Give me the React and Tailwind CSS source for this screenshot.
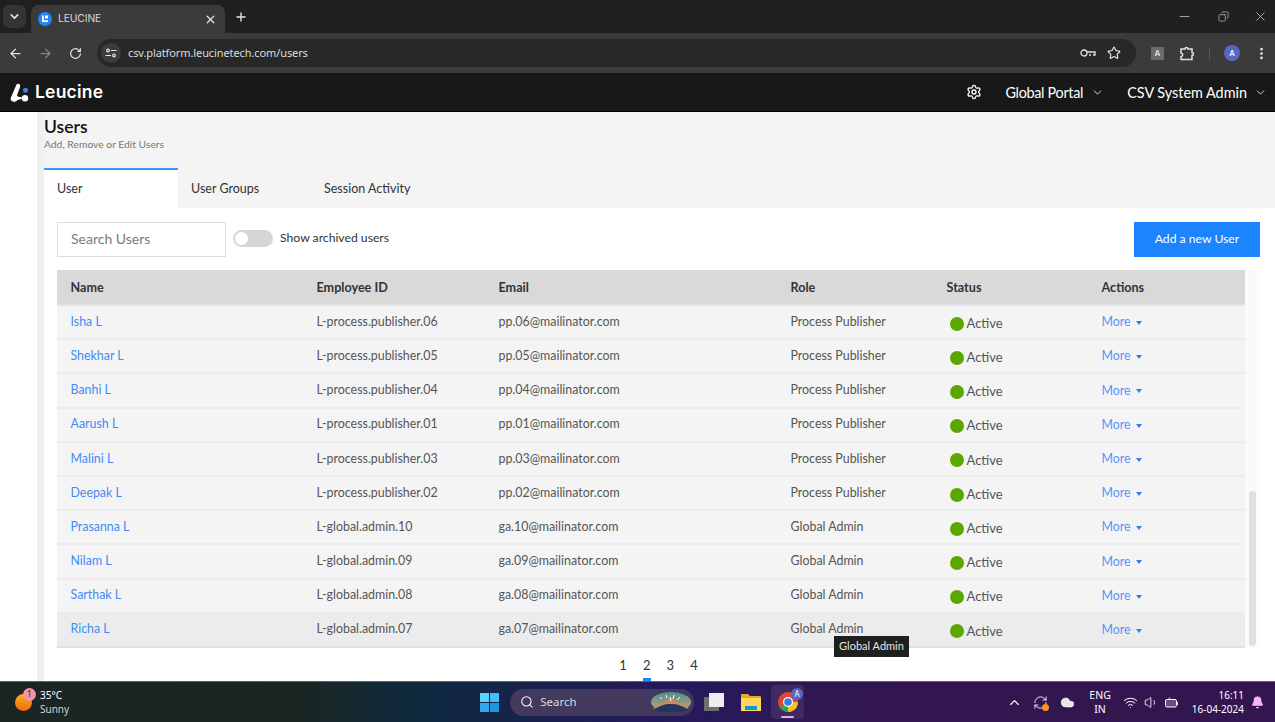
import {
  ArrowLeft,
  ArrowRight,
  Bell,
  ChevronDown,
  ChevronUp,
  Cloud,
  Copy,
  EllipsisVertical,
  Minus,
  Plus,
  RefreshCw,
  RotateCw,
  Search,
  Settings,
  Star,
  Volume1,
  Wifi,
  X,
} from "lucide-react";

const users = [
  ["Isha L", "L-process.publisher.06", "pp.06@mailinator.com", "Process Publisher"],
  ["Shekhar L", "L-process.publisher.05", "pp.05@mailinator.com", "Process Publisher"],
  ["Banhi L", "L-process.publisher.04", "pp.04@mailinator.com", "Process Publisher"],
  ["Aarush L", "L-process.publisher.01", "pp.01@mailinator.com", "Process Publisher"],
  ["Malini L", "L-process.publisher.03", "pp.03@mailinator.com", "Process Publisher"],
  ["Deepak L", "L-process.publisher.02", "pp.02@mailinator.com", "Process Publisher"],
  ["Prasanna L", "L-global.admin.10", "ga.10@mailinator.com", "Global Admin"],
  ["Nilam L", "L-global.admin.09", "ga.09@mailinator.com", "Global Admin"],
  ["Sarthak L", "L-global.admin.08", "ga.08@mailinator.com", "Global Admin"],
  ["Richa L", "L-global.admin.07", "ga.07@mailinator.com", "Global Admin"],
];

const cols = "grid grid-cols-[246px_182px_292px_156px_155px_1fr] pl-[13.500px] pr-[13px]";

function ChromeBar() {
  return (
    <div className="font-['Inter',sans-serif] text-[#e3e3e3]">
      <div className="flex h-[33px] items-end bg-[#1f2020] pl-[3px]">
        <div className="mb-[1px] flex h-[23px] w-[23px] items-center justify-center self-center rounded-md bg-[#333434]">
          <ChevronDown size={13} strokeWidth={3} />
        </div>
        <div className="ml-[5px] flex h-[28px] w-[194px] items-center rounded-t-lg bg-[#3b3b3b] pl-[7px] pr-[8px]">
          <svg width="14" height="14" viewBox="0 0 14 14" className="shrink-0">
            <circle cx="7" cy="7" r="7" fill="#2186f6" />
            <path d="M4 3.500h1.800v4.700h4.200V10H4z" fill="#fff" />
            <rect x="7" y="3.500" width="3" height="3" fill="#fff" />
          </svg>
          <span className="ml-[6px] flex-1 text-[10.300px] tracking-[-0.1px] text-[#d8d8d8]">LEUCINE</span>
          <X size={13} strokeWidth={2.4} />
        </div>
        <Plus size={14} strokeWidth={2.4} className="mb-[9px] ml-[9px]" />
        <div className="mb-[9px] ml-auto flex items-center pr-[7px] text-[#cfcfcf]">
          <Minus size={15} strokeWidth={1.2} />
          <Copy size={11} strokeWidth={1.4} className="ml-[26px] -scale-x-100" />
          <X size={15} strokeWidth={1.2} className="ml-[24px]" />
        </div>
      </div>
      <div className="flex h-[40px] items-center bg-[#3b3b3b] pl-[8px] pr-[6px]">
        <ArrowLeft size={15} strokeWidth={2} />
        <ArrowRight size={15} strokeWidth={2} className="ml-[15px] text-[#858585]" />
        <RotateCw size={13} strokeWidth={2.2} className="ml-[16px]" />
        <div className="ml-[15px] flex h-[28px] flex-1 items-center rounded-full bg-[#282828] pl-[4px] pr-[15px]">
          <div className="flex h-[20px] w-[20px] items-center justify-center rounded-full bg-[#3d3d3d]">
            <svg width="12" height="10" viewBox="0 0 12 10" fill="none" stroke="#e3e3e3" strokeWidth="1.2">
              <circle cx="3" cy="2.500" r="1.300" />
              <path d="M6 2.500h5.500M.5 7.500H6" />
              <circle cx="9" cy="7.500" r="1.300" />
            </svg>
          </div>
          <span className="ml-[7px] flex-1 font-['Noto_Sans',sans-serif] text-[11px] tracking-[-0.1px] text-[#dcdcdc]">
            csv.platform.leucinetech.com/users
          </span>
          <svg width="16" height="10" viewBox="0 0 16 10" fill="none" stroke="#e3e3e3" strokeWidth="1.3">
            <circle cx="4" cy="5" r="3" />
            <path d="M7 4h8v3h-2M11 7H9" />
          </svg>
          <Star size={14} strokeWidth={2} className="ml-[11px]" />
        </div>
        <div className="ml-[15px] flex h-[13px] w-[13px] items-center justify-center bg-[#6b6b6b] text-[8px] font-semibold">A</div>
        <svg width="16" height="15" viewBox="0 0 16 15" fill="none" stroke="#e3e3e3" strokeWidth="1.5" className="ml-[16px]">
          <path d="M1 3h4a1.500 1.500 0 0 1 3 0h4v3.500a1.500 1.500 0 0 1 0 3v4H1v-3a1.700 1.700 0 0 0 0-3.500z" />
        </svg>
        <div className="ml-[13px] h-[13px] w-px bg-[#585858]" />
        <div className="ml-[14px] flex h-[16px] w-[16px] items-center justify-center rounded-full bg-[#5468c4] text-[8px] font-medium text-white">A</div>
        <EllipsisVertical size={15} strokeWidth={2.4} className="ml-[14px]" />
      </div>
    </div>
  );
}

function AppHeader() {
  return (
    <div className="flex h-[39px] items-center border-b border-black bg-[#181818] pl-[10px] pr-[8px] pt-[1px] text-white">
      <svg width="19" height="20" viewBox="0 0 19 20" fill="#fff">
        <path d="M6.500 1.500C7.500.3 9.500.6 10 2.200c.4 1.100 0 2-.4 3L7.300 11.500c-.5 1.400.1 2 1.300 2.300l3.400.6 0 1.300-4.500 1.300c-1 1.300-2.700 2.300-4.800 1.500C.8 17.800.3 16.300.8 14.800z" />
        <circle cx="15" cy="15.300" r="3.200" />
        <circle cx="15.500" cy="7.300" r="2.500" fill="#3f7cf2" />
      </svg>
      <span className="ml-[6px] font-['Inter',sans-serif] text-[17.500px] font-semibold tracking-[0.2px]">Leucine</span>
      <div className="ml-auto flex items-center font-['Lato',sans-serif] text-[14.400px]">
        <Settings size={16} strokeWidth={2} />
        <span className="ml-[23px] tracking-[-0.3px]">Global Portal</span>
        <ChevronDown size={13} strokeWidth={1.5} className="ml-[8px]" />
        <span className="ml-[23px]">CSV System Admin</span>
        <ChevronDown size={13} strokeWidth={1.5} className="ml-[7px]" />
      </div>
    </div>
  );
}

function Toolbar() {
  return (
    <div className="flex items-start pl-[13px] pr-[15px] pt-[14px]">
      <div className="flex h-[35px] w-[169px] items-center border border-[#dcdcdc] pb-[3px] pl-[13px] text-[14px] text-[#7a7a7a]">
        Search Users
      </div>
      <div className="ml-[7px] mt-[8px] flex h-[17px] w-[40px] items-center rounded-full bg-[#d6d6d6] pl-[2px]">
        <div className="h-[13px] w-[13px] rounded-full bg-white" />
      </div>
      <span className="ml-[7px] mt-[7px] text-[12.200px] text-[#333]">Show archived users</span>
      <button className="ml-auto flex h-[35px] w-[126px] items-center justify-center bg-[#1d84ff] text-[12.200px] text-white">
        Add a new User
      </button>
    </div>
  );
}

function UserTable() {
  return (
    <div className="relative mx-[13px] mt-[13px] mr-[15px] flex bg-[#fafafa]">
      <div className="w-[1188px]">
        <div className={`${cols} h-[36px] items-center border-b-2 border-[#e2e2e2] bg-[#d9d9d9] pt-[2px] text-[12.600px] font-bold text-[#333]`}>
          <div>Name</div>
          <div>Employee ID</div>
          <div>Email</div>
          <div>Role</div>
          <div>Status</div>
          <div>Actions</div>
        </div>
        {users.map((u, i) => (
          <div
            key={u[1]}
            className={`${cols} h-[34.200px] items-center border-b-2 text-[12.400px] text-[#555] ${
              i === users.length - 1 ? "border-[#e0e0e0] bg-[#ececec]" : "border-[#ececec] bg-[#f4f4f4]"
            }`}
          >
            <div className="text-[#3f8cf5]">{u[0]}</div>
            <div>{u[1]}</div>
            <div>{u[2]}</div>
            <div>{u[3]}</div>
            <div className="mt-[3px] flex items-center pl-[3px] text-[13px]">
              <span className="h-[14px] w-[14px] rounded-full bg-[#5aa700]" />
              <span className="ml-[3px]">Active</span>
            </div>
            <div className="mt-[1px] flex items-center text-[#5b93f7]">
              More
              <span className="ml-[5px] mt-[1px] h-0 w-0 border-x-[3.500px] border-t-[4px] border-x-transparent border-t-[#2f80ed]" />
            </div>
          </div>
        ))}
      </div>
      <div className="flex flex-1 items-end justify-center pb-[2px]">
        <div className="h-[155px] w-[7px] rounded-full bg-[#e0e0e0]" />
      </div>
      <div className="absolute left-[777px] top-[366px] flex h-[21px] w-[75px] items-center justify-center bg-[#1f1f1f] text-[11px] text-[#e6e6e6]">
        Global Admin
      </div>
    </div>
  );
}

function Pagination() {
  return (
    <div className="flex flex-1 items-start justify-center pr-[2px] pt-[8px] text-[13px] text-[#333]">
      {[1, 2, 3, 4].map((n) => (
        <div key={n} className="relative flex w-[23.700px] justify-center">
          {n}
          {n === 2 && <span className="absolute left-[8px] top-[22px] h-[3px] w-[8px] bg-[#1d84ff]" />}
        </div>
      ))}
    </div>
  );
}

function Taskbar() {
  return (
    <div className="flex h-[41px] shrink-0 items-center border-t border-[#5f6268] bg-[linear-gradient(90deg,#1c2523_0%,#1a2624_24%,#0e2a3f_33%,#251a5c_52%,#33164f_70%,#33164f_100%)] font-['Noto_Sans',sans-serif] text-white">
      <div className="relative ml-[15px] h-[17px] w-[17px] rounded-full bg-[linear-gradient(180deg,#f7b11c,#f06a10)]">
        <span className="absolute -right-[4px] -top-[6px] flex h-[13px] w-[13px] items-center justify-center rounded-full bg-[#f792a4] text-[8.500px] text-[#222]">1</span>
      </div>
      <div className="ml-[8px] text-[10px] leading-[14px]">
        <div>35°C</div>
        <div className="text-[#d4d4d4]">Sunny</div>
      </div>
      <div className="ml-[411px] grid h-[19px] w-[19px] shrink-0 grid-cols-2 gap-[1px]">
        <span className="bg-[#5fd0fb]" />
        <span className="bg-[#46bdf5]" />
        <span className="bg-[#2fa8ee]" />
        <span className="bg-[#1f95e6]" />
      </div>
      <div className="ml-[11px] flex h-[27px] w-[184px] items-center rounded-full bg-[#43395e] pl-[10px] pr-[2px]">
        <Search size={14} strokeWidth={1.8} />
        <span className="ml-[6px] text-[11.500px] text-[#d8d8d8]">Search</span>
        <svg width="42" height="22" viewBox="0 0 42 22" className="ml-auto">
          <defs>
            <linearGradient id="sky" x1="0" y1="0" x2="0" y2="1">
              <stop offset="0" stopColor="#4f8f8a" />
              <stop offset="1" stopColor="#c9a27e" />
            </linearGradient>
          </defs>
          <ellipse cx="21" cy="11" rx="20" ry="10" fill="url(#sky)" />
          <path d="M3 18 21 7l18 11-6 3H9z" fill="#c98d5c" />
          <path d="M3 19c8-5 12-6 18-6s10 1 18 6l-6 2H9z" fill="#24355f" />
          <path d="M10 6l2 2M16 4l1 3M24 4l-1 4M30 6l-3 3M20 6l1 4" stroke="#fff" strokeWidth="1" />
        </svg>
      </div>
      <div className="relative ml-[10px] h-[18px] w-[20px]">
        <span className="absolute bottom-0 left-0 h-[14px] w-[15px] bg-[#6f6f6f]" />
        <span className="absolute right-0 top-0 h-[14px] w-[15px] bg-[#ececec]" />
      </div>
      <svg width="20" height="18" viewBox="0 0 20 18" className="ml-[17px]">
        <path d="M0 2a1 1 0 0 1 1-1h6l2 2h10a1 1 0 0 1 1 1v13H0z" fill="#eba91f" />
        <rect y="5" width="20" height="13" fill="#fbd85a" />
        <rect x="4" y="13" width="12" height="4" fill="#1f8fd8" />
      </svg>
      <div className="relative ml-[10px] flex h-[34px] w-[33px] items-center justify-center rounded bg-[#3f2a63]">
        <svg width="20" height="20" viewBox="0 0 20 20">
          <circle cx="10" cy="10" r="10" fill="#e4452f" />
          <path d="M10 10 1.400 15A10 10 0 0 0 14 19.200z" fill="#2ea44f" />
          <path d="M10 10h10a10 10 0 0 1-6 9.200L10 20z" fill="#f5c21b" />
          <circle cx="10" cy="10" r="5" fill="#fff" />
          <circle cx="10" cy="10" r="3.800" fill="#2f80ed" />
        </svg>
        <span className="absolute right-[1px] top-[3px] flex h-[12px] w-[12px] items-center justify-center rounded-full bg-[#5468c4] text-[8px]">A</span>
        <span className="absolute bottom-[1px] h-[2px] w-[13px] rounded bg-[#e6a9ef]" />
      </div>
      <div className="ml-auto flex items-center pr-[11px]">
        <ChevronUp size={15} strokeWidth={2.2} />
        <div className="relative ml-[11px]">
          <RefreshCw size={15} strokeWidth={1.4} />
          <span className="absolute -bottom-[1px] -right-[1px] h-[7px] w-[7px] rounded-full bg-[#f7931a]" />
        </div>
        <Cloud size={15} fill="#e6e6e6" strokeWidth={1} className="ml-[12px]" />
        <div className="ml-[14px] text-center text-[10.500px] leading-[14px]">
          <div>ENG</div>
          <div>IN</div>
        </div>
        <Wifi size={15} strokeWidth={1.6} className="ml-[12px]" />
        <Volume1 size={15} strokeWidth={1.4} className="ml-[6px]" />
        <svg width="14" height="11" viewBox="0 0 14 11" fill="none" stroke="#fff" className="ml-[6px]">
          <rect x=".5" y="2.500" width="11" height="7.500" rx="1.500" fill="#fff" fillOpacity=".25" />
          <path d="M12.500 5v3M3 3l2-2.500" />
        </svg>
        <div className="ml-[13px] text-right text-[10px] leading-[14px]">
          <div>16:11</div>
          <div>16-04-2024</div>
        </div>
        <Bell size={13} fill="#f3b8ef" stroke="#f3b8ef" className="ml-[7px]" />
      </div>
    </div>
  );
}

export default function App() {
  return (
    <div className="flex h-[722px] w-[1275px] flex-col overflow-hidden bg-white font-['Lato',sans-serif]">
      <ChromeBar />
      <AppHeader />
      <div className="flex min-h-0 flex-1">
        <div className="w-[37px] shrink-0 bg-white" />
        <div className="w-[7px] shrink-0 bg-[#f0f0f0]" />
        <div className="flex min-w-0 flex-1 flex-col">
          <div className="h-[96px] shrink-0 bg-[#f4f4f4]">
            <h1 className="pt-[5px] text-[17.500px] font-semibold leading-[20px] text-[#111]">Users</h1>
            <p className="text-[10.300px] leading-[15px] text-[#777]">Add, Remove or Edit Users</p>
            <div className="mt-[16px] flex h-[40px] items-center text-[12.500px] text-[#333]">
              <div className="flex h-[40px] w-[134px] items-center border-t-2 border-[#3f96f5] bg-white pl-[13px]">User</div>
              <div className="w-[133px] pl-[13px] pt-[2px]">User Groups</div>
              <div className="pl-[13px] pt-[2px]">Session Activity</div>
            </div>
          </div>
          <div className="flex min-h-0 flex-1 flex-col bg-white">
            <Toolbar />
            <UserTable />
            <Pagination />
          </div>
        </div>
      </div>
      <Taskbar />
    </div>
  );
}
